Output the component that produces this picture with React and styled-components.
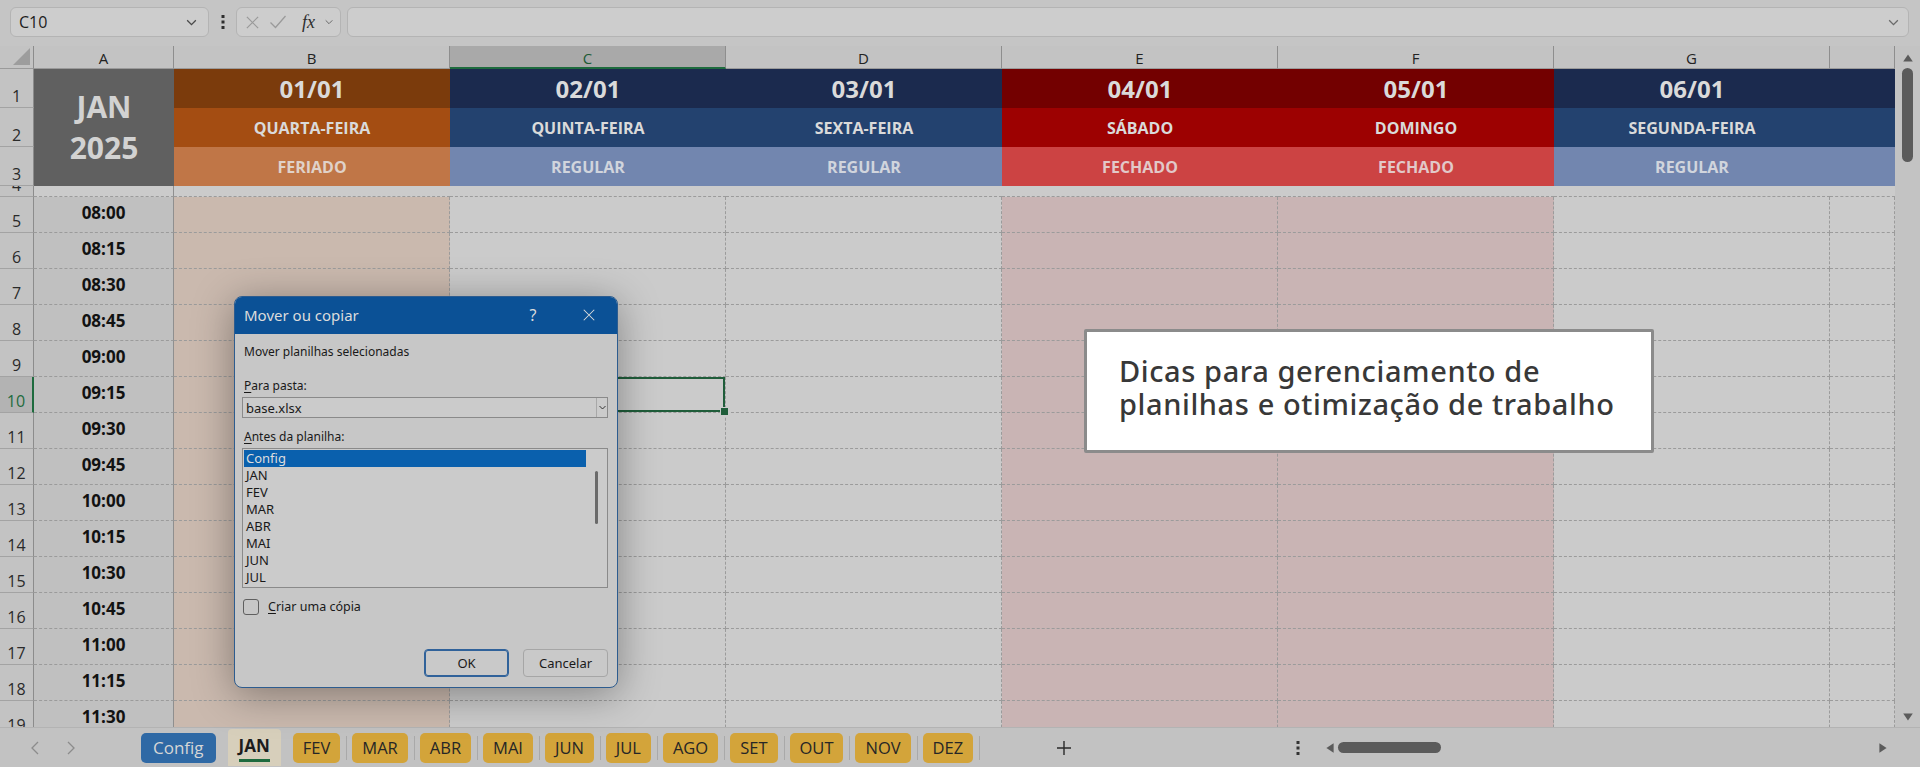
import React from "react";
import styled, { createGlobalStyle, css } from "styled-components";

const GlobalStyle = createGlobalStyle`
  html, body {
    margin: 0;
    padding: 0;
    background: #c5c5c5;
    overflow: hidden;
  }
  * { box-sizing: border-box; }
`;

const Screen = styled.div`
  position: relative;
  width: 1920px;
  height: 767px;
  display: flex;
  flex-direction: column;
  background: #c5c5c5;
  font-family: "Open Sans", "Noto Sans", sans-serif;
  overflow: hidden;
`;

/* ---------- formula bar ---------- */

const FormulaBar = styled.div`
  height: 46px;
  flex: none;
  display: flex;
  align-items: center;
  padding: 0 11px 2px 10px;
`;

const Field = styled.div`
  height: 30px;
  border: 1px solid #b4b4b4;
  border-radius: 6px;
  background: #cdcdcd;
  display: flex;
  align-items: center;
`;

const NameBox = styled(Field)`
  width: 199px;
  padding: 0 10px 0 8px;
  justify-content: space-between;
  font-size: 16px;
  color: #1c1c1c;
`;

const Dots = styled.div`
  width: 27px;
  display: flex;
  justify-content: center;
`;

const FxBox = styled(Field)`
  width: 105px;
  padding: 0 6px 0 8px;
  justify-content: space-between;
`;

const Fx = styled.span`
  font-family: "Liberation Serif", "DejaVu Serif", serif;
  font-style: italic;
  font-size: 18px;
  color: #2e2e2e;
  margin-left: 6px;
`;

const FormulaInput = styled(Field)`
  flex: 1;
  margin-left: 6px;
  justify-content: flex-end;
  padding-right: 8px;
`;

/* ---------- sheet ---------- */

const Main = styled.div`
  height: 681px;
  flex: none;
  display: flex;
`;

const Sheet = styled.div`
  width: 1895px;
  height: 681px;
  overflow: hidden;
  display: grid;
  grid-template-columns: 34px 140px repeat(6, 276px) 65px;
  grid-template-rows: 23px 39px 39px 39px 11px repeat(15, 36px);
`;

const Corner = styled.div`
  background: #c3c3c3;
  border-right: 1px solid #8c8c8c;
  border-bottom: 1px solid #9a9a9a;
  display: flex;
  align-items: flex-end;
  justify-content: flex-end;
  padding: 0 3px 3px 0;
`;

const ColHead = styled.div`
  background: ${(p) => (p.$active ? "#a9a9a9" : "#c3c3c3")};
  color: ${(p) => (p.$active ? "#1d5b35" : "#222")};
  border-right: 1px solid #8e8e8e;
  border-bottom: ${(p) => (p.$active ? "2px solid #1e6b3e" : "1px solid #9a9a9a")};
  font-size: 15px;
  display: flex;
  align-items: center;
  justify-content: center;
  padding-top: 2px;
`;

const RowHead = styled.div`
  background: ${(p) => (p.$active ? "#b3b3b3" : "#c3c3c3")};
  color: ${(p) => (p.$active ? "#1e6b3e" : "#2a2a2a")};
  border-bottom: 1px solid #a3a3a3;
  border-right: ${(p) => (p.$active ? "2px solid #1e6b3e" : "1px solid #8c8c8c")};
  font-size: 16px;
  line-height: 20px;
  display: flex;
  align-items: flex-end;
  justify-content: center;
  padding-bottom: 1px;
  overflow: hidden;
`;

const MonthCell = styled.div`
  grid-row: span 3;
  background: #606060;
  color: #d2d2d2;
  font-weight: 700;
  font-size: 30px;
  line-height: 41px;
  display: flex;
  flex-direction: column;
  align-items: center;
  justify-content: center;
  padding-bottom: 2px;
`;

const BandCell = styled.div`
  background: ${(p) => p.$bg};
  color: ${(p) => (p.$muted ? "rgba(232,232,232,0.82)" : "#dadada")};
  font-weight: 700;
  font-size: ${(p) => (p.$big ? "24px" : "16px")};
  display: flex;
  align-items: center;
  justify-content: center;
  white-space: nowrap;
  overflow: hidden;
`;

const GapCell = styled.div`
  background: #cbcbcb;
  border-right: ${(p) => (p.$first ? "1px solid #8f8f8f" : "none")};
  border-bottom: 1px dashed #9b9b9b;
`;

const TimeCell = styled.div`
  background: #c0c0c0;
  border-right: 1px solid #8f8f8f;
  border-bottom: 1px dashed #9b9b9b;
  color: #121212;
  font-weight: 700;
  font-size: 17px;
  display: flex;
  align-items: center;
  justify-content: center;
  padding-bottom: 4px;
`;

const tints = {
  holiday: "#cab9ae",
  closed: "#c9b4b4",
  regular: "#cbcbcb",
};

const DataCell = styled.div`
  position: relative;
  background: ${(p) => tints[p.$tint]};
  border-right: 1px dashed #9b9b9b;
  border-bottom: 1px dashed #9b9b9b;
  ${(p) =>
    p.$selected &&
    css`
      box-shadow: inset 0 0 0 2px #1f5d3a;
      &::after {
        content: "";
        position: absolute;
        right: -4px;
        bottom: -4px;
        width: 7px;
        height: 7px;
        background: #1f5d3a;
        border: 1px solid #cbcbcb;
        z-index: 2;
      }
    `}
`;

const VScroll = styled.div`
  width: 25px;
  background: #c3c3c3;
  display: flex;
  flex-direction: column;
  align-items: center;
  padding: 6px 0 4px;
`;

const VThumb = styled.div`
  width: 11px;
  height: 94px;
  margin-top: 4px;
  border-radius: 6px;
  background: #5b5b5b;
`;

const Grow = styled.div`
  flex: 1;
`;

/* ---------- tab bar ---------- */

const TabBar = styled.div`
  height: 40px;
  flex: none;
  display: flex;
  align-items: center;
  background: #c2c2c2;
  border-top: 1px solid #b3b3b3;
`;

const Nav = styled.div`
  width: 141px;
  display: flex;
  align-items: center;
  gap: 26px;
  padding-left: 30px;
`;

const TabStrip = styled.div`
  width: 900px;
  height: 100%;
  display: flex;
  align-items: center;
`;

const tabKinds = {
  config: css`
    background: #2f69a5;
    color: #d6d6d6;
    padding: 0 12px;
  `,
  active: css`
    background: #d7cfbb;
    color: #1c1c1c;
    font-weight: 700;
    height: 37px;
    border-radius: 4px 4px 0 0;
    padding: 0 11px 4px;
    &::after {
      content: "";
      position: absolute;
      left: 11px;
      right: 11px;
      bottom: 4px;
      height: 3px;
      background: #1e6b3e;
    }
  `,
  month: css`
    background: #d3a43a;
    color: #262626;
    padding: 0 10px;
    font-size: 16.5px;
  `,
};

const Tab = styled.div`
  position: relative;
  height: 30px;
  border-radius: 5px;
  font-size: 17px;
  display: flex;
  align-items: center;
  white-space: nowrap;
  ${(p) => tabKinds[p.$kind]}
`;

const TabSep = styled.div`
  width: 1px;
  height: 24px;
  margin: 0 5px 0 6px;
  background: ${(p) => (p.$hidden ? "transparent" : "#a9a9a9")};
`;

const AddButton = styled.div`
  width: 46px;
  display: flex;
  justify-content: center;
`;

const HScroll = styled.div`
  flex: 1;
  margin-left: 209px;
  display: flex;
  align-items: center;
  padding-right: 31px;
`;

const ScrollGap = styled.div`
  width: 24px;
`;

const HThumb = styled.div`
  width: 103px;
  height: 11px;
  border-radius: 6px;
  background: #5b5b5b;
  margin-left: 2px;
`;

/* ---------- dialog ---------- */

const Dialog = styled.div`
  position: absolute;
  left: 234px;
  top: 296px;
  width: 384px;
  height: 392px;
  background: #c7c7c7;
  border: 1px solid #2d5c8f;
  border-radius: 8px;
  box-shadow: 0 6px 40px rgba(0, 0, 0, 0.36);
  overflow: hidden;
  display: flex;
  flex-direction: column;
  font-family: "Noto Sans", "Open Sans", sans-serif;
  color: #191919;
`;

const TitleBar = styled.div`
  height: 37px;
  flex: none;
  background: #0b5196;
  color: #dcdcdc;
  display: flex;
  align-items: center;
  padding: 0 0 2px 9px;
  font-size: 15px;
`;

const TitleText = styled.div`
  flex: 1;
`;

const TitleButton = styled.div`
  width: 56px;
  display: flex;
  justify-content: center;
  font-size: 16px;
`;

const DialogBody = styled.div`
  flex: 1;
  display: flex;
  flex-direction: column;
  padding: 9px 9px 10px 7px;
  font-size: 12px;
`;

const Label = styled.div`
  padding-left: 2px;
  line-height: 17px;
  margin-top: ${(p) => p.$mt || 0}px;
  margin-bottom: ${(p) => p.$mb || 0}px;
  u { text-decoration-thickness: 1px; text-underline-offset: 2px; }
`;

const Select = styled.div`
  height: 21px;
  border: 1px solid #8a8a8a;
  background: #cbcbcb;
  display: flex;
  align-items: center;
  font-size: 13px;
`;

const SelectValue = styled.div`
  flex: 1;
  padding-left: 3px;
`;

const SelectArrow = styled.div`
  width: 11px;
  height: 100%;
  border-left: 1px solid #a8a8a8;
  display: flex;
  align-items: center;
  justify-content: center;
`;

const ListBox = styled.div`
  height: 140px;
  border: 1px solid #8a8a8a;
  background: #cbcbcb;
  display: flex;
  padding: 1px;
`;

const ListItems = styled.div`
  flex: 1;
  display: flex;
  flex-direction: column;
`;

const ListItem = styled.div`
  height: 17px;
  line-height: 17px;
  padding-left: 2px;
  font-size: 13px;
  background: ${(p) => (p.$selected ? "#0a60ad" : "transparent")};
  color: ${(p) => (p.$selected ? "#dedede" : "#191919")};
`;

const ListScroll = styled.div`
  width: 20px;
  display: flex;
  justify-content: center;
  padding-top: 21px;
`;

const ListThumb = styled.div`
  width: 3px;
  height: 53px;
  border-radius: 2px;
  background: #6a6a6a;
`;

const CheckRow = styled.div`
  display: flex;
  align-items: center;
  gap: 9px;
  margin-top: 10px;
  font-size: 12.5px;
  u { text-underline-offset: 2px; }
`;

const CheckBox = styled.div`
  width: 16px;
  height: 16px;
  border: 1px solid #5f5f5f;
  border-radius: 3px;
  margin-left: 1px;
`;

const ButtonRow = styled.div`
  margin-top: auto;
  display: flex;
  justify-content: flex-end;
  gap: 14px;
`;

const Button = styled.div`
  width: 85px;
  height: 28px;
  border-radius: 4px;
  background: #c9c9c9;
  border: 1px solid ${(p) => (p.$primary ? "#30629a" : "#a6a6a6")};
  box-shadow: ${(p) => (p.$primary ? "inset 0 0 0 1px #30629a" : "none")};
  display: flex;
  align-items: center;
  justify-content: center;
  font-size: 13px;
`;

/* ---------- callout ---------- */

const Callout = styled.div`
  position: absolute;
  left: 1084px;
  top: 329px;
  width: 570px;
  height: 124px;
  background: #ffffff;
  border: 3px solid #8b8b8b;
  border-radius: 2px;
  display: flex;
  flex-direction: column;
  justify-content: center;
  padding: 0 0 8px 32px;
  font-family: "Noto Sans", "Open Sans", sans-serif;
  font-weight: 500;
  font-size: 29px;
  line-height: 33px;
  color: #383838;
  letter-spacing: 0.6px;
`;

/* ---------- icons ---------- */

const Chevron = ({ size = 12, color = "#4a4a4a" }) => (
  <svg width={size} height={size} viewBox="0 0 12 12">
    <path d="M2 4l4 4 4-4" fill="none" stroke={color} strokeWidth="1.2" />
  </svg>
);

const VDots = ({ color = "#2e2e2e" }) => (
  <svg width="4" height="16" viewBox="0 0 4 16">
    <rect x="0.5" y="1" width="3" height="3" fill={color} />
    <rect x="0.5" y="6.5" width="3" height="3" fill={color} />
    <rect x="0.5" y="12" width="3" height="3" fill={color} />
  </svg>
);

const Cross = ({ size = 16, color = "#9a9a9a", width = 1.3 }) => (
  <svg width={size} height={size} viewBox="0 0 16 16">
    <path d="M2 2l12 12M14 2L2 14" stroke={color} strokeWidth={width} fill="none" />
  </svg>
);

const Check = () => (
  <svg width="18" height="16" viewBox="0 0 18 16">
    <path d="M1.5 8.5l5 5L16.5 2" stroke="#9a9a9a" strokeWidth="1.3" fill="none" />
  </svg>
);

const Tri = ({ dir, color = "#5b5b5b", size = 10 }) => {
  const pts = {
    up: "1,8 9,8 5,2",
    down: "1,2 9,2 5,8",
    left: "8,1 8,9 2,5",
    right: "2,1 2,9 8,5",
  }[dir];
  return (
    <svg width={size} height={size} viewBox="0 0 10 10">
      <polygon points={pts} fill={color} />
    </svg>
  );
};

const Angle = ({ dir }) => (
  <svg width="10" height="16" viewBox="0 0 10 16">
    <path
      d={dir === "left" ? "M8 2L2 8l6 6" : "M2 2l6 6-6 6"}
      fill="none"
      stroke="#8c8c8c"
      strokeWidth="1.3"
    />
  </svg>
);

const Plus = () => (
  <svg width="16" height="16" viewBox="0 0 16 16">
    <path d="M8 1v14M1 8h14" stroke="#2a2a2a" strokeWidth="1.4" />
  </svg>
);

/* ---------- data ---------- */

const columns = ["A", "B", "C", "D", "E", "F", "G", ""];

const palette = {
  holiday: ["#7b3b0c", "#a44d12", "#c07647"],
  regular: ["#1b2a4e", "#23426f", "#7286af"],
  closed: ["#730000", "#9d0101", "#cc4343"],
};

const days = [
  { date: "01/01", name: "QUARTA-FEIRA", status: "FERIADO", kind: "holiday" },
  { date: "02/01", name: "QUINTA-FEIRA", status: "REGULAR", kind: "regular" },
  { date: "03/01", name: "SEXTA-FEIRA", status: "REGULAR", kind: "regular" },
  { date: "04/01", name: "SÁBADO", status: "FECHADO", kind: "closed" },
  { date: "05/01", name: "DOMINGO", status: "FECHADO", kind: "closed" },
  { date: "06/01", name: "SEGUNDA-FEIRA", status: "REGULAR", kind: "regular" },
  { date: "", name: "", status: "", kind: "regular" },
];

const times = [
  "08:00", "08:15", "08:30", "08:45", "09:00", "09:15", "09:30", "09:45",
  "10:00", "10:15", "10:30", "10:45", "11:00", "11:15", "11:30",
];

const tabs = [
  { label: "Config", kind: "config" },
  { label: "JAN", kind: "active" },
  ...["FEV", "MAR", "ABR", "MAI", "JUN", "JUL", "AGO", "SET", "OUT", "NOV", "DEZ"].map(
    (m) => ({ label: m, kind: "month" })
  ),
];

const sheetsList = ["Config", "JAN", "FEV", "MAR", "ABR", "MAI", "JUN", "JUL"];

const bandField = ["date", "name", "status"];

const App = () => {
  return (
    <>
      <GlobalStyle />
      <Screen>
        <FormulaBar>
          <NameBox>
            <span>C10</span>
            <Chevron size={13} />
          </NameBox>
          <Dots>
            <VDots />
          </Dots>
          <FxBox>
            <Cross size={15} />
            <Check />
            <Fx>fx</Fx>
            <Chevron size={10} color="#6a6a6a" />
          </FxBox>
          <FormulaInput>
            <Chevron size={13} color="#6a6a6a" />
          </FormulaInput>
        </FormulaBar>

        <Main>
          <Sheet>
            <Corner>
              <svg width="17" height="17" viewBox="0 0 17 17">
                <polygon points="17,0 17,17 0,17" fill="#9d9d9d" />
              </svg>
            </Corner>
            {columns.map((c, i) => (
              <ColHead key={"h" + i} $active={c === "C"}>
                {c}
              </ColHead>
            ))}

            {[0, 1, 2].map((r) => (
              <React.Fragment key={"band" + r}>
                <RowHead>{r + 1}</RowHead>
                {r === 0 && (
                  <MonthCell>
                    <span>JAN</span>
                    <span>2025</span>
                  </MonthCell>
                )}
                {days.map((d, i) => (
                  <BandCell
                    key={i}
                    $bg={palette[d.kind][r]}
                    $big={r === 0}
                    $muted={r === 2}
                  >
                    {d[bandField[r]]}
                  </BandCell>
                ))}
              </React.Fragment>
            ))}

            <RowHead>4</RowHead>
            <GapCell $first />
            {days.map((d, i) => (
              <GapCell key={"g" + i} />
            ))}

            {times.map((t, r) => {
              const rowNo = r + 5;
              return (
                <React.Fragment key={t}>
                  <RowHead $active={rowNo === 10}>{rowNo}</RowHead>
                  <TimeCell>{t}</TimeCell>
                  {days.map((d, i) => (
                    <DataCell
                      key={i}
                      $tint={d.kind}
                      $selected={rowNo === 10 && i === 1}
                    />
                  ))}
                </React.Fragment>
              );
            })}
          </Sheet>
          <VScroll>
            <Tri dir="up" size={12} />
            <VThumb />
            <Grow />
            <Tri dir="down" size={12} />
          </VScroll>
        </Main>

        <TabBar>
          <Nav>
            <Angle dir="left" />
            <Angle dir="right" />
          </Nav>
          <TabStrip>
            {tabs.map((t, i) => (
              <React.Fragment key={t.label}>
                {i > 0 && <TabSep $hidden={i === 1 || i === 2} />}
                <Tab $kind={t.kind}>{t.label}</Tab>
              </React.Fragment>
            ))}
            <TabSep />
          </TabStrip>
          <AddButton>
            <Plus />
          </AddButton>
          <HScroll>
            <VDots color="#333" />
            <ScrollGap />
            <Tri dir="left" size={12} />
            <HThumb />
            <Grow />
            <Tri dir="right" size={12} />
          </HScroll>
        </TabBar>

        <Dialog>
          <TitleBar>
            <TitleText>Mover ou copiar</TitleText>
            <TitleButton>?</TitleButton>
            <TitleButton>
              <Cross size={14} color="#dcdcdc" width={1.2} />
            </TitleButton>
          </TitleBar>
          <DialogBody>
            <Label $mb={17}>Mover planilhas selecionadas</Label>
            <Label $mb={3}>
              <u>P</u>ara pasta:
            </Label>
            <Select>
              <SelectValue>base.xlsx</SelectValue>
              <SelectArrow>
                <Chevron size={9} color="#222" />
              </SelectArrow>
            </Select>
            <Label $mt={10} $mb={3}>
              <u>A</u>ntes da planilha:
            </Label>
            <ListBox>
              <ListItems>
                {sheetsList.map((s, i) => (
                  <ListItem key={s} $selected={i === 0}>
                    {s}
                  </ListItem>
                ))}
              </ListItems>
              <ListScroll>
                <ListThumb />
              </ListScroll>
            </ListBox>
            <CheckRow>
              <CheckBox />
              <span>
                <u>C</u>riar uma cópia
              </span>
            </CheckRow>
            <ButtonRow>
              <Button $primary>OK</Button>
              <Button>Cancelar</Button>
            </ButtonRow>
          </DialogBody>
        </Dialog>

        <Callout>
          <div>Dicas para gerenciamento de</div>
          <div>planilhas e otimização de trabalho</div>
        </Callout>
      </Screen>
    </>
  );
};

export default App;
